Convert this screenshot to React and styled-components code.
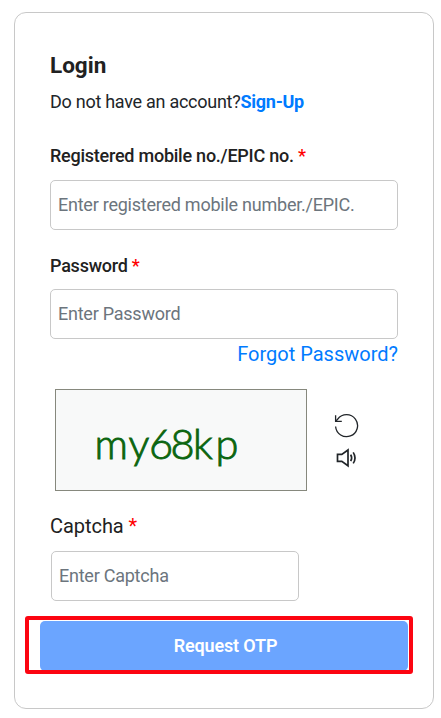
import React from 'react';
import styled, { createGlobalStyle } from 'styled-components';

const App = () => {
  return (
    <>
      <GlobalStyle />
      <LoginCard>
        <Title>Login</Title>
        <Subtitle>
          Do not have an account?<SignUp href="#">Sign-Up</SignUp>
        </Subtitle>
        <Field>
          <Label>
            Registered mobile no./EPIC no. <Required>*</Required>
          </Label>
          <Input type="text" placeholder="Enter registered mobile number./EPIC." />
        </Field>
        <Field>
          <Label>
            Password <Required>*</Required>
          </Label>
          <Input type="password" placeholder="Enter Password" />
        </Field>
        <ForgotPassword href="#">Forgot Password?</ForgotPassword>
        <CaptchaRow>
          <CaptchaImage viewBox="0 0 250 100">
            <text x="38.5 72.5 93 114.5 137 159.5" y="68.5">
              my68kp
            </text>
          </CaptchaImage>
          <CaptchaActions>
            <IconButton type="button" aria-label="Refresh captcha">
              <svg width="26" height="26" viewBox="0 0 26 26">
                <path d="M2.6 14.5 A11 11 0 1 0 4.8 7 L2.8 9.2" />
                <path d="M2.6 3.2 V9.3 H8.8" />
              </svg>
            </IconButton>
            <IconButton type="button" aria-label="Play captcha">
              <svg width="22" height="20" viewBox="0 0 22 20">
                <path
                  strokeWidth="1.7"
                  d="M2.5 6.4 H6.8 L13 2 V17.8 L6.8 13.4 H2.5 Z"
                />
                <path strokeWidth="1.7" d="M15.7 6.6 Q17.6 9.9 15.7 13.2" />
                <path strokeWidth="1.7" d="M18.2 4.4 Q21.8 9.9 18.2 15.4" />
              </svg>
            </IconButton>
          </CaptchaActions>
        </CaptchaRow>
        <CaptchaField>
          <CaptchaLabel>
            Captcha <Required>*</Required>
          </CaptchaLabel>
          <CaptchaInput type="text" placeholder="Enter Captcha" />
        </CaptchaField>
        <Submit>
          <SubmitButton type="button">Request OTP</SubmitButton>
          <Highlight />
        </Submit>
      </LoginCard>
    </>
  );
};

const GlobalStyle = createGlobalStyle`
  * {
    box-sizing: border-box;
  }
  body {
    margin: 0;
    background: #ffffff;
    color: #212529;
    font-family: Roboto, sans-serif;
  }
`;

const LoginCard = styled.form`
  display: flex;
  flex-direction: column;
  width: 420px;
  height: 697px;
  margin: 12px 0 0 14px;
  padding: 39px 35px 0;
  border: 1px solid #c8c8c8;
  border-radius: 12px;
  white-space: nowrap;
`;

const Title = styled.h1`
  margin: 0;
  color: #212121;
  font-size: 22.5px;
  font-weight: 700;
  line-height: 26px;
`;

const Subtitle = styled.p`
  margin: 10px 0 28px;
  font-size: 18px;
  letter-spacing: -0.27px;
  line-height: 27px;
`;

const SignUp = styled.a`
  color: #007bff;
  font-weight: 700;
  letter-spacing: -0.25px;
  text-decoration: none;
`;

const Label = styled.label`
  height: 37px;
  color: #212121;
  font-size: 18px;
  font-weight: 500;
  letter-spacing: -0.24px;
  line-height: 26px;
`;

const Field = styled.div`
  display: flex;
  flex-direction: column;
  height: 109px;
  & + & {
    height: 87px;
  }
  & + & ${Label} {
    line-height: 28px;
  }
`;

const Required = styled.span`
  color: #ff0000;
`;

const Input = styled.input`
  width: 100%;
  height: 50px;
  padding: 0 7px 2px;
  border: 1px solid #c8c8c8;
  border-radius: 5px;
  background: #ffffff;
  font-family: inherit;
  font-size: 18px;
  letter-spacing: -0.24px;
  &::placeholder {
    color: #6c757d;
  }
`;

const ForgotPassword = styled.a`
  align-self: flex-end;
  color: #007bff;
  font-size: 20px;
  line-height: 30px;
  text-decoration: none;
`;

const CaptchaRow = styled.div`
  display: flex;
  gap: 26px;
  margin: 20px 0 0 5px;
`;

const CaptchaImage = styled.svg`
  width: 252px;
  height: 102px;
  border: 1px solid #86887d;
  background: #f8f9f9;
  text {
    fill: #0b650f;
    font-family: Lato, sans-serif;
    font-size: 41.5px;
    font-weight: 300;
    stroke: #0b650f;
    stroke-width: 0.9px;
  }
`;

const CaptchaActions = styled.div`
  display: flex;
  flex-direction: column;
  align-items: center;
  gap: 10px;
  padding-top: 23px;
`;

const IconButton = styled.button`
  display: flex;
  padding: 0;
  border: 0;
  background: none;
  svg {
    fill: none;
    stroke: #212529;
    stroke-width: 1.3;
  }
`;

const CaptchaField = styled(Field)`
  height: 110px;
  margin-top: 20px;
`;

const CaptchaLabel = styled(Label)`
  height: 40px;
  font-size: 20px;
  font-weight: 400;
  letter-spacing: -0.05px;
  line-height: 30px;
`;

const CaptchaInput = styled(Input)`
  width: 248px;
  margin-left: 1px;
`;

const Submit = styled.div`
  position: relative;
  margin: 0 -10px;
`;

const SubmitButton = styled.button`
  display: block;
  width: 368px;
  height: 50px;
  padding: 0 0 2px 3px;
  border: 0;
  border-radius: 5px;
  background: #6ba5ff;
  color: #ffffff;
  font-family: inherit;
  font-size: 18px;
  font-weight: 600;
  letter-spacing: -0.15px;
`;

// red frame drawn over the submit button
const Highlight = styled.div`
  position: absolute;
  top: -5px;
  left: -15px;
  width: 388px;
  height: 58px;
  border: 4px solid #fc0511;
  border-radius: 3px;
  pointer-events: none;
`;

export default App;
